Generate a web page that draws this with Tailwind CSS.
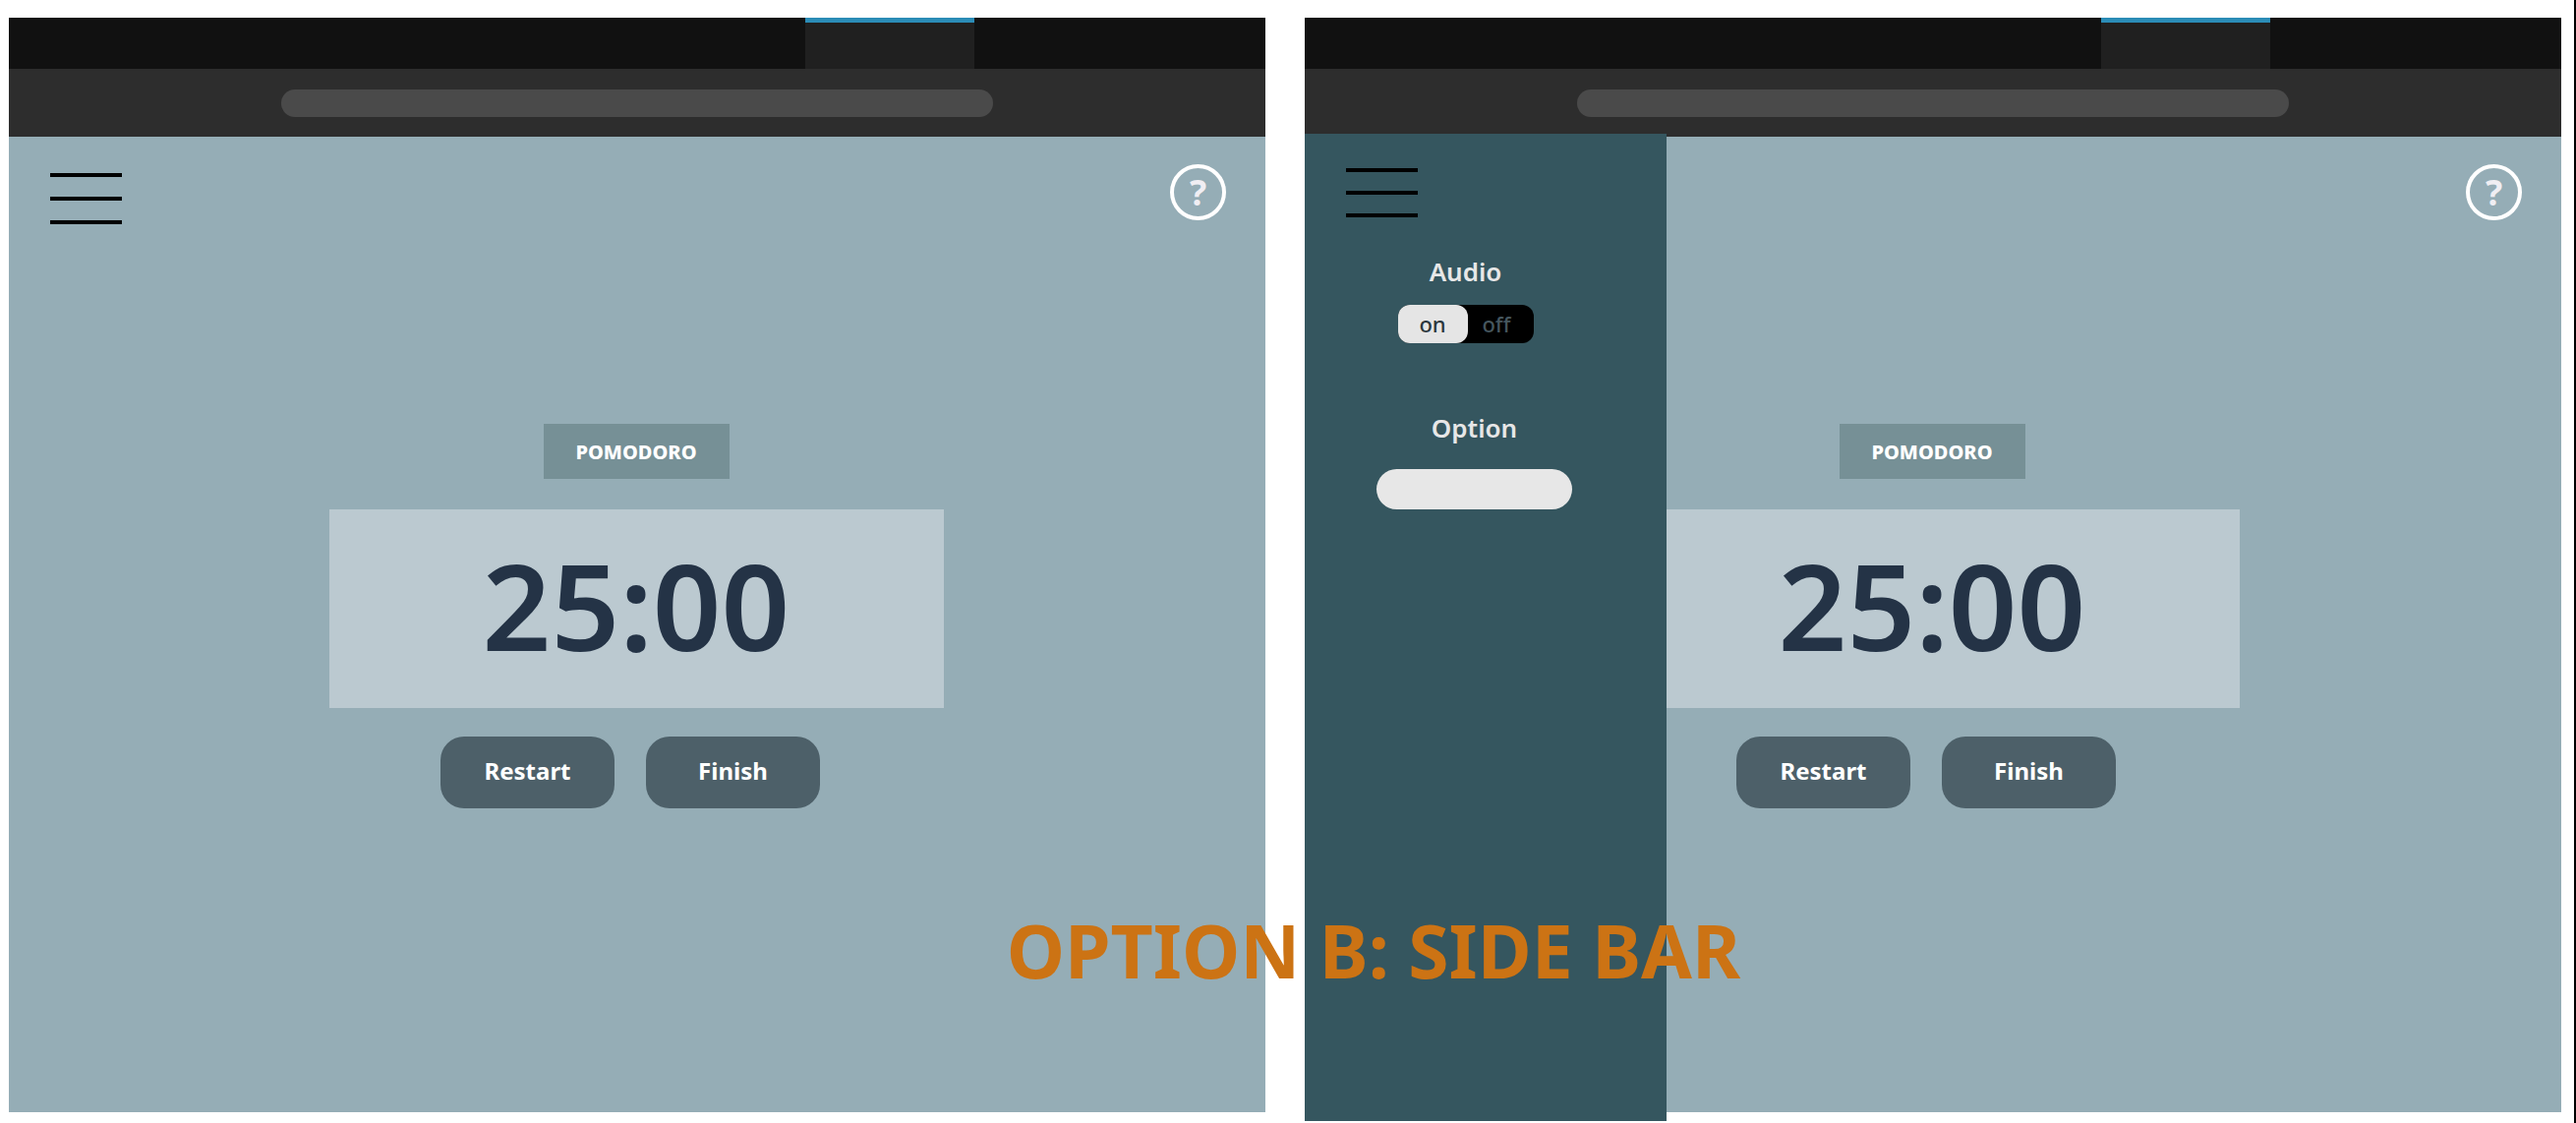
<!DOCTYPE html>
<html lang="en">
<head>
<meta charset="utf-8">
<meta name="viewport" content="width=device-width, initial-scale=1">
<title>Pomodoro – Option B: Side bar</title>
<script src="https://cdn.jsdelivr.net/npm/@tailwindcss/browser@4"></script>
</head>
<body class="relative flex min-h-screen gap-10 overflow-x-hidden border-r-2 border-black bg-white pt-[18px] pr-[13px] pb-[11px] pl-[9px] font-['Noto_Sans',sans-serif]">

  <!-- Closed side bar -->
  <section class="flex flex-1 flex-col" aria-label="Side bar closed">
    <div class="flex h-[52px] justify-end bg-[#111111] pr-[296px]">
      <div class="w-[172px] border-t-5 border-[#2b8cb6] bg-[#202020]"></div>
    </div>
    <div class="flex h-[69px] items-center justify-center bg-[#2d2d2d]">
      <div class="h-7 w-[724px] rounded-full bg-[#4a4a4a]"></div>
    </div>
    <main class="flex flex-1 flex-col bg-[#95adb6]">
      <header class="flex h-[292px] items-start justify-between pt-7 pr-10 pl-[42px]">
        <button type="button" aria-label="Open menu" class="mt-[9px] flex w-[73px] flex-col gap-5">
          <span class="h-1 w-full bg-black"></span>
          <span class="h-1 w-full bg-black"></span>
          <span class="h-1 w-full bg-black"></span>
        </button>
        <button type="button" aria-label="Help" class="flex size-[57px] items-center justify-center rounded-full border-4 border-white text-4xl font-bold text-[#f0eef3]">?</button>
      </header>
      <div class="flex flex-col items-center pr-[2px]">
        <h2 class="flex h-14 w-[189px] items-center justify-center bg-[#769096] pt-[2px] text-[20px] font-extrabold text-white">POMODORO</h2>
        <div class="mt-[31px] flex h-[202px] w-[625px] items-center justify-center bg-[#bbc9d0] pb-2 text-[122px] leading-none font-semibold text-[#243346]">25:00</div>
        <div class="mt-[29px] flex gap-8 pr-3">
          <button type="button" class="h-[73px] w-[177px] rounded-3xl bg-[#4d6069] pb-1 text-2xl font-bold text-white">Restart</button>
          <button type="button" class="h-[73px] w-[177px] rounded-3xl bg-[#4d6069] pb-1 text-2xl font-bold text-white">Finish</button>
        </div>
      </div>
    </main>
  </section>

  <!-- Open side bar -->
  <section class="flex flex-1 flex-col" aria-label="Side bar open">
    <div class="flex h-[52px] justify-end bg-[#111111] pr-[296px]">
      <div class="w-[172px] border-t-5 border-[#2b8cb6] bg-[#202020]"></div>
    </div>
    <div class="flex h-[69px] items-center justify-center bg-[#2d2d2d]">
      <div class="h-7 w-[724px] rounded-full bg-[#4a4a4a]"></div>
    </div>
    <main class="relative flex flex-1 flex-col bg-[#95adb6]">
      <header class="flex h-[292px] items-start justify-end pt-7 pr-10">
        <button type="button" aria-label="Help" class="flex size-[57px] items-center justify-center rounded-full border-4 border-white text-4xl font-bold text-[#f0eef3]">?</button>
      </header>
      <div class="flex flex-col items-center pr-[2px]">
        <h2 class="flex h-14 w-[189px] items-center justify-center bg-[#769096] pt-[2px] text-[20px] font-extrabold text-white">POMODORO</h2>
        <div class="mt-[31px] flex h-[202px] w-[625px] items-center justify-center bg-[#bbc9d0] pb-2 text-[122px] leading-none font-semibold text-[#243346]">25:00</div>
        <div class="mt-[29px] flex gap-8 pr-3">
          <button type="button" class="h-[73px] w-[177px] rounded-3xl bg-[#4d6069] pb-1 text-2xl font-bold text-white">Restart</button>
          <button type="button" class="h-[73px] w-[177px] rounded-3xl bg-[#4d6069] pb-1 text-2xl font-bold text-white">Finish</button>
        </div>
      </div>

      <aside class="absolute -top-[3px] -bottom-[9px] left-0 flex w-[368px] flex-col bg-[#35565f] pt-[35px]">
        <button type="button" aria-label="Close menu" class="ml-[42px] flex w-[73px] flex-col gap-[19px]">
          <span class="h-1 w-full bg-black"></span>
          <span class="h-1 w-full bg-black"></span>
          <span class="h-1 w-full bg-black"></span>
        </button>
        <div role="radiogroup" aria-labelledby="audio" class="mt-[35px] flex flex-col items-center pr-[41px]">
          <h3 id="audio" class="text-[26px] leading-10 font-semibold text-[#e7e7e7]">Audio</h3>
          <div class="mt-[14px] flex h-[39px] w-[138px] rounded-xl bg-black text-[22px] font-medium">
            <label class="flex w-[71px] items-center justify-center rounded-xl bg-[#e5e5e5] text-[#2b373d]"><input type="radio" name="audio" checked class="sr-only">on</label>
            <label class="flex w-[67px] items-center justify-center pr-2 text-[#46565e]"><input type="radio" name="audio" class="sr-only">off</label>
          </div>
        </div>
        <div class="mt-[66px] flex flex-col items-center pr-[23px]">
          <label for="option" class="text-[26px] leading-10 font-semibold text-[#e7e7e7]">Option</label>
          <input id="option" type="text" class="mt-[22px] h-[41px] w-[199px] rounded-full bg-[#e7e7e7] px-4 text-xl text-[#2b373d]">
        </div>
      </aside>
    </main>
  </section>

  <h1 class="absolute top-[918px] left-[39.1%] text-[75px] leading-[96px] font-bold whitespace-nowrap text-[#cc7314]">OPTION B: SIDE BAR</h1>
</body>
</html>
